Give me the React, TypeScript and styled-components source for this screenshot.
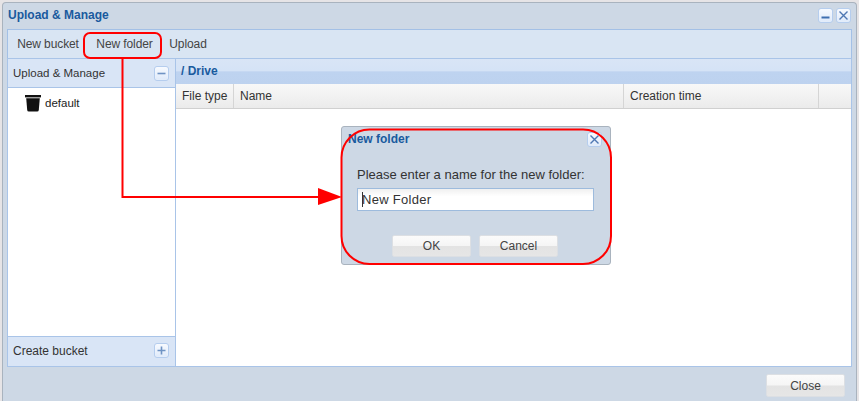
import React from "react";
import styled, { createGlobalStyle } from "styled-components";

const Global = createGlobalStyle`
  html, body { margin: 0; padding: 0; width: 859px; height: 401px; overflow: hidden; background: #fff; }
  body { font-family: "Liberation Sans", Arial, sans-serif; font-size: 12px; color: #333; }
  * { box-sizing: border-box; }
`;

const Page = styled.div`
  position: relative;
  width: 859px;
  height: 401px;
  padding: 2px 2px 0 2px;
  background: #e6e4e6;
`;

const Win = styled.div`
  width: 855px;
  height: 399px;
  background: #cdd8e5;
  border: 1px solid #a9b3be;
  border-bottom: 0;
  border-radius: 4px 4px 0 0;
  padding: 0 4px;
  display: flex;
  flex-direction: column;
`;

const TitleBar = styled.div`
  height: 26px;
  flex: none;
  display: flex;
  align-items: center;
  justify-content: space-between;
  padding: 0 1px 2px 1px;
`;

const Title = styled.div`
  font-weight: bold;
  font-size: 12px;
  color: #1a5a9e;
`;

const Tools = styled.div`
  display: flex;
  gap: 3px;
`;

const ToolBtn = styled.div`
  width: 15px;
  height: 15px;
  display: flex;
  align-items: center;
  justify-content: center;
  background: linear-gradient(#f7faff, #dfeafa);
  border: 1px solid #b5cdee;
  border-radius: 3px;
  box-shadow: inset 0 0 1px #fff;
`;

const Toolbar = styled.div`
  height: 29px;
  flex: none;
  display: flex;
  align-items: center;
  padding: 0 0 0 6px;
  background: #d9e5f3;
  border: 1px solid #a3c0e6;
  border-bottom: 0;
`;

const ToolItem = styled.div<{ $w: number }>`
  width: ${(p) => p.$w}px;
  flex: none;
  text-align: center;
  font-size: 12px;
  color: #444;
  letter-spacing: -0.1px;
  padding-bottom: 1px;
`;

const Body = styled.div`
  height: 309px;
  flex: none;
  display: flex;
  border: 1px solid #a9c4e8;
  background: #fff;
`;

const Side = styled.div`
  width: 168px;
  flex: none;
  display: flex;
  flex-direction: column;
  border-right: 1px solid #a9c4e8;
`;

const SideHead = styled.div`
  height: 29px;
  flex: none;
  display: flex;
  align-items: center;
  justify-content: space-between;
  padding: 0 6px 0 5px;
  background: #d9e5f6;
  border-bottom: 1px solid #a9c4e8;
  color: #333;
  font-size: 11.5px;
`;

const SideFoot = styled(SideHead)`
  height: 30px;
  border-bottom: 0;
  border-top: 1px solid #a9c4e8;
  font-size: 12px;
  padding-bottom: 2px;
`;

const Tree = styled.div`
  flex: 1;
  padding: 6px 0 0 17px;
`;

const TreeItem = styled.div`
  display: flex;
  align-items: center;
  gap: 4px;
  font-size: 11.5px;
  color: #222;
`;

const Main = styled.div`
  flex: 1;
  display: flex;
  flex-direction: column;
  min-width: 0;
`;

const PathBar = styled.div`
  height: 25px;
  flex: none;
  padding: 0 0 2px 5px;
  display: flex;
  align-items: center;
  font-weight: bold;
  font-size: 12px;
  color: #1a5a9e;
  background: linear-gradient(#d9e5f6 0, #d5e3f6 46%, #bed3f0 52%, #bdd2ef 100%);
`;

const Head = styled.div`
  height: 25px;
  flex: none;
  display: flex;
  background: linear-gradient(#f8f8f8, #ebebeb);
  border-bottom: 1px solid #d0d0d0;
`;

const Col = styled.div<{ $w?: number }>`
  ${(p) => (p.$w ? `width: ${p.$w}px; flex: none;` : "flex: 1;")}
  display: flex;
  align-items: center;
  padding: 0 6px;
  font-size: 12px;
  color: #333;
  white-space: nowrap;
  border-right: 1px solid #d5d5d5;
  &:last-child { border-right: 0; }
`;

const Footer = styled.div`
  flex: 1;
  display: flex;
  justify-content: flex-end;
  padding: 7px 7px 0 0;
`;

const Btn = styled.div<{ $w?: number; $h?: number }>`
  width: ${(p) => p.$w ?? 79}px;
  height: ${(p) => p.$h ?? 22}px;
  display: flex;
  align-items: center;
  justify-content: center;
  font-size: 12px;
  color: #444;
  border-radius: 2px;
  border: 1px solid #dcdfe3;
  background: linear-gradient(#fbfbfb 0, #f5f5f5 48%, #e3e3e3 52%, #e6e6e6 100%);
`;

const Dialog = styled.div`
  position: absolute;
  left: 341px;
  top: 126px;
  width: 270px;
  height: 139px;
  background: #cdd8e5;
  border: 1px solid #a9b3be;
  border-radius: 3px;
  display: flex;
  flex-direction: column;
  padding: 0 8px 0 6px;
`;

const DialogHead = styled.div`
  height: 24px;
  flex: none;
  display: flex;
  align-items: center;
  justify-content: space-between;
`;

const DialogBody = styled.div`
  display: flex;
  flex-direction: column;
  padding: 16px 0 0 9px;
`;

const Prompt = styled.div`
  font-size: 13px;
  color: #333;
  line-height: 15px;
  white-space: nowrap;
`;

const Input = styled.div`
  margin-top: 6px;
  width: 237px;
  height: 23px;
  background: linear-gradient(#f0f0f0, #fff 35%);
  border: 1px solid #9dbbdd;
  display: flex;
  align-items: center;
  padding-left: 4px;
  font-size: 13px;
  color: #333;
  letter-spacing: 0.3px;
`;

const Caret = styled.span`
  width: 1px;
  height: 15px;
  background: #333;
  margin-right: -1px;
`;

const DialogBtns = styled.div`
  display: flex;
  justify-content: flex-start;
  gap: 8px;
  margin-top: 24px;
  padding-left: 35px;
`;

const Overlay = styled.svg`
  position: absolute;
  left: 0;
  top: 0;
  pointer-events: none;
`;

const X = () => (
  <svg width="11" height="11" viewBox="0 0 11 11">
    <path d="M1.5 1.5 9.5 9.5M9.5 1.5 1.5 9.5" stroke="#4f78b3" strokeWidth="1.4" fill="none" />
  </svg>
);
const Minus = () => (
  <svg width="11" height="11" viewBox="0 0 11 11">
    <path d="M1.5 7.5H9.5" stroke="#3f6fb0" strokeWidth="2" fill="none" />
  </svg>
);
const MinusMid = () => (
  <svg width="11" height="11" viewBox="0 0 11 11">
    <path d="M1.5 5.5H9.5" stroke="#6f93c4" strokeWidth="1.6" fill="none" />
  </svg>
);
const Plus = () => (
  <svg width="11" height="11" viewBox="0 0 11 11">
    <path d="M1.5 5.5H9.5M5.5 1.5V9.5" stroke="#6f93c4" strokeWidth="1.6" fill="none" />
  </svg>
);
const Bucket = () => (
  <svg width="16" height="18" viewBox="0 0 16 18">
    <path d="M0 1H16V3.4H0Z" fill="#111" />
    <path d="M1.2 4.2H14.8L13.8 16Q13.6 17.6 12.2 17.6H3.8Q2.4 17.6 2.2 16Z" fill="#111" />
  </svg>
);

export default function App() {
  return (
    <Page>
      <Global />
      <Win>
        <TitleBar>
          <Title>Upload &amp; Manage</Title>
          <Tools>
            <ToolBtn><Minus /></ToolBtn>
            <ToolBtn><X /></ToolBtn>
          </Tools>
        </TitleBar>
        <Toolbar>
          <ToolItem $w={68}>New bucket</ToolItem>
          <ToolItem $w={85}>New folder</ToolItem>
          <ToolItem $w={42}>Upload</ToolItem>
        </Toolbar>
        <Body>
          <Side>
            <SideHead>
              Upload &amp; Manage
              <ToolBtn><MinusMid /></ToolBtn>
            </SideHead>
            <Tree>
              <TreeItem><Bucket />default</TreeItem>
            </Tree>
            <SideFoot>
              Create bucket
              <ToolBtn><Plus /></ToolBtn>
            </SideFoot>
          </Side>
          <Main>
            <PathBar>/ Drive</PathBar>
            <Head>
              <Col $w={58}>File type</Col>
              <Col>Name</Col>
              <Col $w={195}>Creation time</Col>
              <Col $w={32} />
            </Head>
          </Main>
        </Body>
        <Footer>
          <Btn $w={79} $h={23}>Close</Btn>
        </Footer>
      </Win>
      <Dialog>
        <DialogHead>
          <Title>New folder</Title>
          <ToolBtn><X /></ToolBtn>
        </DialogHead>
        <DialogBody>
          <Prompt>Please enter a name for the new folder:</Prompt>
          <Input><Caret />New Folder</Input>
          <DialogBtns>
            <Btn>OK</Btn>
            <Btn>Cancel</Btn>
          </DialogBtns>
        </DialogBody>
      </Dialog>
      <Overlay width="859" height="401" viewBox="0 0 859 401">
        <rect x="84" y="33" width="77" height="25" rx="6" fill="none" stroke="#f00" strokeWidth="2" />
        <path d="M122.5 58V197H320" fill="none" stroke="#f00" strokeWidth="2" />
        <path d="M318 188L342 197L318 205Z" fill="#f00" />
        <rect x="341.5" y="129.5" width="269.5" height="134.5" rx="28" fill="none" stroke="#f00" strokeWidth="2" />
      </Overlay>
    </Page>
  );
}
